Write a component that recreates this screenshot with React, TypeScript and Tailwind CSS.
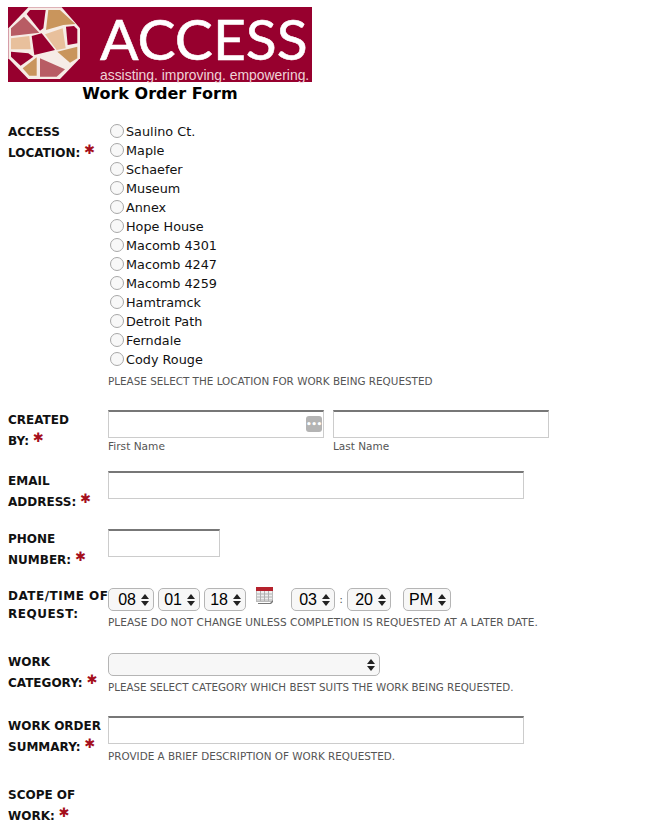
const locations = [
  'Saulino Ct.',
  'Maple',
  'Schaefer',
  'Museum',
  'Annex',
  'Hope House',
  'Macomb 4301',
  'Macomb 4247',
  'Macomb 4259',
  'Hamtramck',
  'Detroit Path',
  'Ferndale',
  'Cody Rouge'
]

function Logo() {
  return (
    <svg viewBox="24 21 216 219" width="72" height="73" className="shrink-0">
      <polygon points="85,22 185,22 240,85 240,175 180,237 85,237 25,175 25,85" fill="#f6ece6" />
      <polygon points="90,30 137,30 130,85 120,92 80,42" fill="#97002e" />
      <polygon points="72,50 118,98 33,108 33,85" fill="#b85c64" />
      <polygon points="145,30 180,30 226,72 190,75 138,90" fill="#c9955c" />
      <polygon points="198,80 222,78 232,88 232,130 203,135" fill="#97002e" />
      <polygon points="135,103 188,85 197,145 170,150" fill="#e8c09c" />
      <polygon points="33,115 88,108 92,148 33,148" fill="#e8c09c" />
      <polygon points="95,108 125,100 165,150 103,165" fill="#97002e" />
      <polygon points="172,155 232,140 232,175 210,188" fill="#c9955c" />
      <polygon points="33,155 85,160 100,170 62,197 33,170" fill="#97002e" />
      <polygon points="110,172 110,227 88,227 68,205" fill="#c9955c" />
      <polygon points="120,175 195,208 170,230 120,230" fill="#b85c64" />
    </svg>
  )
}

function FieldLabel({ first, second, className = 'pt-px leading-[21px]', required = true }: { first: string; second: string; className?: string; required?: boolean }) {
  return (
    <div className={`w-[100px] shrink-0 whitespace-nowrap text-[12px] font-bold text-[#111] ${className}`}>
      <div>{first}</div>
      <div>
        {second}
        {required && <span className="relative top-[-3px] ml-[4px] text-[13px] leading-none text-[#a50f1c]">✱</span>}
      </div>
    </div>
  )
}

function Help({ children, className = 'text-[10.4px]' }: { children: string; className?: string }) {
  return <p className={`whitespace-nowrap leading-[14px] text-[#555] ${className}`}>{children}</p>
}

function TextBox({ className }: { className: string }) {
  return <input type="text" className={`block h-[28px] border border-[#ccc] border-t-2 border-t-[#777] bg-white ${className}`} />
}

function Arrows() {
  return (
    <svg width="8" height="12" viewBox="0 0 8 12" className="shrink-0">
      <polygon points="4,0 8,5 0,5" fill="#222" />
      <polygon points="4,12 8,7 0,7" fill="#222" />
    </svg>
  )
}

function Select({ value, className }: { value: string; className: string }) {
  return (
    <div className={`flex h-[23px] items-center justify-end gap-[5px] rounded-[5px] border border-[#b5b5b5] bg-[#f7f7f7] pr-[4px] font-['Liberation_Sans',sans-serif] text-[16px] text-black ${className}`}>
      {value}
      <Arrows />
    </div>
  )
}

function CalendarIcon() {
  return (
    <svg width="17" height="17" viewBox="0 0 17 17" className="-mt-px ml-[10px] shrink-0">
      <rect x="0.5" y="0.5" width="16" height="14" fill="#efefef" stroke="#bbb" />
      <rect x="0" y="0" width="17" height="4" fill="#b5212c" />
      <path d="M1 7h15M1 10h15M1 13h15M4.5 4v10M8.5 4v10M12.5 4v10" stroke="#b0b0b0" strokeWidth="1" />
      <path d="M2 16h12l3-3v2l-2 2H2z" fill="#777" />
    </svg>
  )
}

export default function App() {
  return (
    <div className="h-[824px] overflow-hidden bg-white pl-2 pt-[7px] font-['DejaVu_Sans',sans-serif] text-[#111]">
      <div className="w-[304px]">
        <div className="flex h-[75px] bg-[#97002e]">
          <Logo />
          <div className="ml-[20px] flex flex-col text-white">
            <span className="mt-[4px] font-['Lato',sans-serif] text-[57px] leading-[54px] [-webkit-text-stroke:0.6px_white]">ACCESS</span>
            <span className="mt-[3px] font-['Liberation_Sans',sans-serif] text-[13.9px] leading-[14px] text-[#f0d3d8]">assisting. improving. empowering.</span>
          </div>
        </div>
        <h1 className="mt-[2px] text-center text-[16px] font-bold leading-[20px] text-black">Work Order Form</h1>
      </div>

      <form>
        <div className="mt-[17px] flex">
          <FieldLabel first="ACCESS" second="LOCATION:" />
          <div className="pt-px">
            {locations.map(name => (
              <label key={name} className="flex h-[19px] items-center text-[12.8px] leading-[19px] text-[#111]">
                <input
                  type="radio"
                  name="location"
                  className="mb-[2px] ml-[2px] mr-[2px] h-[14px] w-[14px] appearance-none rounded-full border border-[#a8a8a8] bg-[#f8f8f8]"
                />
                {name}
              </label>
            ))}
            <div className="mt-[5px]">
              <Help>PLEASE SELECT THE LOCATION FOR WORK BEING REQUESTED</Help>
            </div>
          </div>
        </div>

        <div className="mt-[21px] flex">
          <FieldLabel first="CREATED" second="BY:" />
          <div className="flex gap-[9px] pt-px">
            <div>
              <div className="relative">
                <TextBox className="w-[216px]" />
                <span className="absolute right-[2px] top-[6px] flex h-[16px] w-[16px] items-center justify-center rounded-[3px] bg-[#b4b4b4] text-[9px] font-bold leading-[8px] tracking-[-0.5px] text-white">
                  •••
                </span>
              </div>
              <p className="mt-px text-[10.6px] leading-[15px] text-[#555]">First Name</p>
            </div>
            <div>
              <TextBox className="w-[216px]" />
              <p className="mt-px text-[10.5px] leading-[15px] text-[#555]">Last Name</p>
            </div>
          </div>
        </div>

        <div className="mt-[16px] flex">
          <FieldLabel first="EMAIL" second="ADDRESS:" />
          <div className="pt-px">
            <TextBox className="w-[416px]" />
          </div>
        </div>

        <div className="mt-[15px] flex">
          <FieldLabel first="PHONE" second="NUMBER:" />
          <div className="pt-px">
            <TextBox className="w-[112px]" />
          </div>
        </div>

        <div className="mt-[17px] flex">
          <FieldLabel first="DATE/TIME OF" second="REQUEST:" className="-mt-px tracking-[0.5px] leading-[18px]" required={false} />
          <div>
            <div className="flex items-start">
              <Select value="08" className="w-[46px]" />
              <Select value="01" className="ml-[4px] w-[42px]" />
              <Select value="18" className="ml-[4px] w-[42px]" />
              <CalendarIcon />
              <Select value="03" className="ml-[18px] w-[44px]" />
              <span className="w-[12px] text-center text-[11px] leading-[23px] text-[#555]">:</span>
              <Select value="20" className="w-[44px]" />
              <Select value="PM" className="ml-[12px] w-[48px]" />
            </div>
            <div className="mt-[4px]">
              <Help className="text-[10.55px]">PLEASE DO NOT CHANGE UNLESS COMPLETION IS REQUESTED AT A LATER DATE.</Help>
            </div>
          </div>
        </div>

        <div className="mt-[22px] flex">
          <FieldLabel first="WORK" second="CATEGORY:" />
          <div className="pt-[2px]">
            <Select value="" className="w-[272px]" />
            <div className="mt-[4px]">
              <Help className="text-[10.3px]">PLEASE SELECT CATEGORY WHICH BEST SUITS THE WORK BEING REQUESTED.</Help>
            </div>
          </div>
        </div>

        <div className="mt-[21px] flex">
          <FieldLabel first="WORK ORDER" second="SUMMARY:" />
          <div className="pt-px">
            <TextBox className="w-[416px]" />
            <div className="mt-[5px]">
              <Help>PROVIDE A BRIEF DESCRIPTION OF WORK REQUESTED.</Help>
            </div>
          </div>
        </div>

        <div className="mt-[21px] flex">
          <FieldLabel first="SCOPE OF" second="WORK:" />
        </div>
      </form>
    </div>
  )
}
